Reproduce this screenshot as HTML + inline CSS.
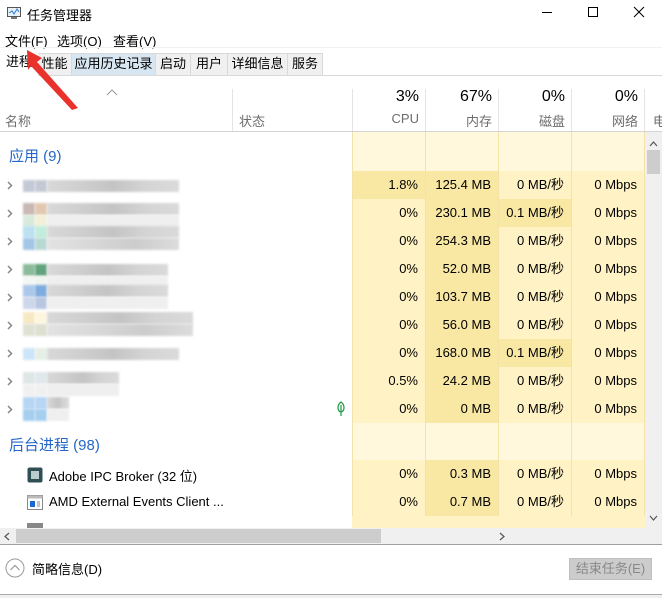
<!DOCTYPE html><html><head><meta charset="utf-8"><style>
*{margin:0;padding:0;box-sizing:border-box}
body{width:662px;height:598px;overflow:hidden;background:#fff;font-family:"Liberation Sans","Noto Sans CJK SC",sans-serif;font-size:13px;color:#000;position:relative}
.a{position:absolute;white-space:nowrap}
.tab{position:absolute;top:53px;height:22px;background:#f0f0f0;border:1px solid #d9d9d9;border-bottom:none;font-size:13px;line-height:20px;text-align:center}
.c{position:absolute;text-align:right;padding-right:7px;font-size:13px;line-height:28px}
.g{color:#6d6d6d}
.blur{position:absolute;filter:blur(1px)}
</style></head><body>
<svg class="a" style="left:6px;top:6px" width="16" height="14" viewBox="0 0 16 14"><rect x="1.5" y="1.5" width="13" height="9" fill="#e8f0f8" stroke="#555"/><polyline points="3,7 6,5 8,8 11,3 13,6" fill="none" stroke="#2a7ad0" stroke-width="1"/><rect x="5" y="11" width="6" height="2" fill="#777"/></svg>
<div class="a" style="left:27px;top:5px;font-size:13px">任务管理器</div>
<div class="a" style="left:542px;top:12px;width:10px;height:1px;background:#000"></div>
<div class="a" style="left:588px;top:7px;width:10px;height:10px;border:1px solid #000"></div>
<svg class="a" style="left:633px;top:6px" width="12" height="12"><path d="M1 1L11 11M11 1L1 11" stroke="#000" stroke-width="1"/></svg>
<div class="a" style="left:5px;top:31px">文件(F)</div>
<div class="a" style="left:57px;top:31px">选项(O)</div>
<div class="a" style="left:113px;top:31px">查看(V)</div>
<div class="a" style="left:0;top:47px;width:662px;height:1px;background:#f0f0f0"></div>
<div class="a" style="left:0;top:75px;width:662px;height:1px;background:#d9d9d9"></div>
<div class="tab" style="left:37px;width:35px">性能</div>
<div class="tab" style="left:71px;width:85px;background:#d8e6f2">应用历史记录</div>
<div class="tab" style="left:155px;width:36px">启动</div>
<div class="tab" style="left:190px;width:38px">用户</div>
<div class="tab" style="left:227px;width:61px">详细信息</div>
<div class="tab" style="left:287px;width:36px">服务</div>
<div class="a" style="left:0;top:50px;width:38px;height:26px;background:#fff;font-size:13px;padding-left:6px;line-height:24px">进程</div>
<svg class="a" style="left:106px;top:89px" width="12" height="7"><path d="M1 6L6 1L11 6" fill="none" stroke="#999" stroke-width="1"/></svg>
<div class="a g" style="left:5px;top:111px">名称</div>
<div class="a" style="left:232px;top:89px;width:1px;height:42px;background:#e4e4e4"></div>
<div class="a g" style="left:239px;top:111px">状态</div>
<div class="a" style="left:352px;top:89px;width:1px;height:42px;background:#e4e4e4"></div>
<div class="a" style="left:425px;top:89px;width:1px;height:42px;background:#e4e4e4"></div>
<div class="a" style="left:498px;top:89px;width:1px;height:42px;background:#e4e4e4"></div>
<div class="a" style="left:571px;top:89px;width:1px;height:42px;background:#e4e4e4"></div>
<div class="a" style="left:644px;top:89px;width:1px;height:42px;background:#e4e4e4"></div>
<div class="a" style="left:352px;top:88px;width:67px;text-align:right;font-size:16px">3%</div>
<div class="a g" style="left:352px;top:111px;width:67px;text-align:right">CPU</div>
<div class="a" style="left:425px;top:88px;width:67px;text-align:right;font-size:16px">67%</div>
<div class="a g" style="left:425px;top:111px;width:67px;text-align:right">内存</div>
<div class="a" style="left:498px;top:88px;width:67px;text-align:right;font-size:16px">0%</div>
<div class="a g" style="left:498px;top:111px;width:67px;text-align:right">磁盘</div>
<div class="a" style="left:571px;top:88px;width:67px;text-align:right;font-size:16px">0%</div>
<div class="a g" style="left:571px;top:111px;width:67px;text-align:right">网络</div>
<div class="a g" style="left:653px;top:111px">电</div>
<div class="a" style="left:0;top:131px;width:662px;height:1px;background:#d4d4d4"></div>
<div class="a" style="left:352px;top:132px;width:293px;height:396px;background:#fff8dc"></div>
<div class="a" style="left:425px;top:132px;width:1px;height:396px;background:#f3e3a8"></div>
<div class="a" style="left:498px;top:132px;width:1px;height:396px;background:#f3e3a8"></div>
<div class="a" style="left:571px;top:132px;width:1px;height:396px;background:#f3e3a8"></div>
<div class="a" style="left:352px;top:132px;width:1px;height:396px;background:#f3e3a8"></div>
<div class="a" style="left:644px;top:132px;width:1px;height:396px;background:#f3e3a8"></div>
<div class="a" style="left:9px;top:145px;font-size:15px;color:#2467c8">应用 (9)</div>
<div class="a" style="left:9px;top:434px;font-size:15px;color:#2467c8">后台进程 (98)</div>
<div id="rows"></div>
<div class="a" style="left:645px;top:132px;width:17px;height:396px;background:#f0f0f0"></div>
<svg class="a" style="left:649px;top:141px" width="9" height="6"><path d="M1 5L4.5 1L8 5" fill="none" stroke="#555" stroke-width="1.2"/></svg>
<div class="a" style="left:647px;top:150px;width:13px;height:24px;background:#cdcdcd"></div>
<svg class="a" style="left:649px;top:515px" width="9" height="6"><path d="M1 1L4.5 5L8 1" fill="none" stroke="#555" stroke-width="1.2"/></svg>
<div class="a" style="left:0;top:528px;width:662px;height:16px;background:#f0f0f0"></div>
<div class="a" style="left:16px;top:529px;width:365px;height:14px;background:#cdcdcd"></div>
<svg class="a" style="left:4px;top:532px" width="6" height="9"><path d="M5 1L1 4.5L5 8" fill="none" stroke="#555" stroke-width="1.2"/></svg>
<svg class="a" style="left:499px;top:532px" width="6" height="9"><path d="M1 1L5 4.5L1 8" fill="none" stroke="#555" stroke-width="1.2"/></svg>
<div class="a" style="left:0;top:544px;width:662px;height:1px;background:#a0a0a0"></div>
<svg class="a" style="left:5px;top:558px" width="20" height="20"><circle cx="10" cy="10" r="9" fill="none" stroke="#999"/><path d="M5.5 12L10 7.5L14.5 12" fill="none" stroke="#999" stroke-width="1.2"/></svg>
<div class="a" style="left:32px;top:559px">简略信息(D)</div>
<div class="a" style="left:569px;top:558px;width:83px;height:22px;background:#ccc;border:1px solid #bfbfbf;color:#888;text-align:center;line-height:20px">结束任务(E)</div>
<div class="a" style="left:0;top:594px;width:662px;height:4px;background:#f0f0f0;border-top:1px solid #aaa"></div>
<svg class="a" style="left:0;top:0" width="100" height="120"><polygon points="27,50 42,58 37,62 78,108 72,110 31,66 28,70" fill="#e8322b"/></svg>
<script>
var d=[["1.8%","125.4 MB","0 MB/秒","0 Mbps"],["0%","230.1 MB","0.1 MB/秒","0 Mbps"],["0%","254.3 MB","0 MB/秒","0 Mbps"],["0%","52.0 MB","0 MB/秒","0 Mbps"],["0%","103.7 MB","0 MB/秒","0 Mbps"],["0%","56.0 MB","0 MB/秒","0 Mbps"],["0%","168.0 MB","0.1 MB/秒","0 Mbps"],["0%","24.2 MB","0 MB/秒","0 Mbps"],["0%","0 MB","0 MB/秒","0 Mbps"]];
d[7][0]="0.5%";
var ic=[["#c4c9d6","#c3c9d4","",""],["#c9b8b4","#e2c8b0","#d8eadc","#f3f0d8"],["#bde0f1","#c3ecdc","#a3c6e6","#b8d8d4"],["#8bbb9a","#62a37e","#f4f6f4","#eef4ee"],["#abc7ea","#7eacde","#ccd7ea","#b8c6e0"],["#f6e8c2","#fdf5e0","#dfe1d3","#dde0d0"],["#cde5f8","#e5efe6","",""],["#dfe6e6","#dfe8ec","#f0f0f0","#f0f0f0"],["#b6d6f4","#b6d6f4","#a6ceef","#a6ceef"]];
var wd=[156,156,156,145,145,170,156,96,46];
var tb=[9,4,-1,9,2,1,9,5,2];
var h="";
function cells(t,v,hi){var x=[352,425,498,571];for(var i=0;i<4;i++){var bg=i==1?"#f9e8a4":"#fff2c4";if(hi&&i==0)bg="#f9e8a4";if(v[i]=="0.1 MB/秒")bg="#f9e8a4";h+='<div class="c" style="left:'+(x[i]+1)+'px;top:'+t+'px;width:72px;height:28px;background:'+bg+'">'+v[i]+'</div>';}}
for(var r=0;r<9;r++){var t=171+r*28;cells(t,d[r],r==0);var y=t+tb[r];
h+='<svg class="a" style="left:7px;top:'+(t+10)+'px" width="6" height="9"><path d="M1 1L4.5 4.5L1 8" fill="none" stroke="#888" stroke-width="1.5"/></svg>';
h+='<div class="blur" style="left:23px;top:'+y+'px;width:12px;height:12px;background:'+ic[r][0]+'"></div>';
h+='<div class="blur" style="left:35px;top:'+y+'px;width:12px;height:12px;background:'+ic[r][1]+'"></div>';
h+='<div class="blur" style="left:47px;top:'+y+'px;width:'+(wd[r]-24)+'px;height:12px;background:linear-gradient(90deg,#d8d8d8,#cfcfcf,#c4c4c4,#d4d4d4,#dadada)"></div>';
if(ic[r][2]){h+='<div class="blur" style="left:23px;top:'+(y+12)+'px;width:12px;height:12px;background:'+ic[r][2]+'"></div>';
h+='<div class="blur" style="left:35px;top:'+(y+12)+'px;width:12px;height:12px;background:'+ic[r][3]+'"></div>';
h+='<div class="blur" style="left:47px;top:'+(y+12)+'px;width:'+(wd[r]-24)+'px;height:12px;background:'+(r==2||r==5?'linear-gradient(90deg,#e2e2e2,#d8d8d8,#cccccc,#dcdcdc)':'#efefef')+'"></div>';}}
h+='<svg class="a" style="left:335px;top:401px" width="12" height="16"><path d="M6 1C2 4 2 10 6 11C10 10 10 4 6 1ZM6 4V15" fill="none" stroke="#1a9a40" stroke-width="1.2"/></svg>';
var bd=[["0%","0.3 MB","0 MB/秒","0 Mbps"],["0%","0.7 MB","0 MB/秒","0 Mbps"]];
for(var r=0;r<2;r++){cells(460+r*28,bd[r],false);}
h+='<div class="a" style="left:352px;top:516px;width:293px;height:12px;background:#fff2c4"></div>';
h+='<svg class="a" style="left:27px;top:467px" width="16" height="16"><rect x="0.5" y="0.5" width="15" height="15" rx="2" fill="#2f4f55"/><rect x="4" y="4" width="8" height="8" fill="#bcc"/></svg><div class="a" style="left:49px;top:466px">Adobe IPC Broker (32 位)</div>';
h+='<svg class="a" style="left:27px;top:495px" width="16" height="15"><rect x="0.5" y="0.5" width="15" height="14" fill="#fff" stroke="#888"/><rect x="0.5" y="0.5" width="15" height="3" fill="#bbb"/><rect x="3" y="6" width="5" height="6" fill="#1a6ad0"/><path d="M10 7H13M10 9H13M10 11H13" stroke="#888"/></svg><div class="a" style="left:49px;top:494px">AMD External Events Client ...</div>';
h+='<div class="a" style="left:27px;top:523px;width:16px;height:5px;background:#888"></div>';
document.getElementById("rows").innerHTML=h;
</script>
</body></html>
